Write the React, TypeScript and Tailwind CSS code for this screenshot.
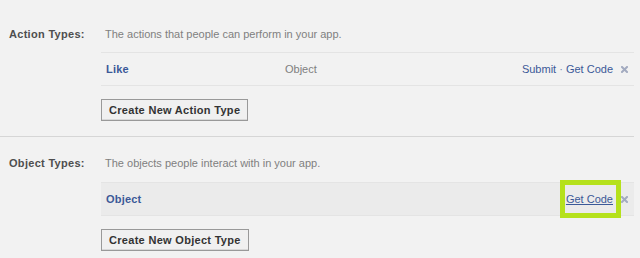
import React from 'react'

function CloseX() {
  return (
    <svg width="7" height="7" viewBox="0 0 7 7" className="ml-[8px] shrink-0">
      <path d="M1 1 L6 6 M6 1 L1 6" stroke="#a3abc0" strokeWidth="2" strokeLinecap="square" />
    </svg>
  )
}

function CreateButton({ label }: { label: string }) {
  return (
    <button className="h-[22px] px-[7px] border border-[#999] bg-[#f0f0f0] shadow-[inset_0_-1px_0_#d8d8d8] font-bold tracking-[0.3px] text-[11px] text-[#333] leading-none">
      {label}
    </button>
  )
}

export default function App() {
  return (
    <div className="w-[640px] h-[258px] bg-[#f2f2f2] font-['Liberation_Sans',Arial,sans-serif] text-[11px] overflow-hidden">
      {/* action types */}
      <section className="pt-[27px] pb-[15px] border-b border-[#d6d6d6] w-[634px]">
        <div className="flex h-[14px] items-center">
          <div className="w-[101px] pl-[9px] font-bold tracking-[0.3px] text-[#4e4e4e]">Action Types:</div>
          <div className="pl-[4px] text-[#808080]">The actions that people can perform in your app.</div>
        </div>
        <div className="ml-[101px] mt-[11px]">
          <div className="flex items-center h-[34px] border-y border-[#e4e4e4] pl-[5px] pr-[6px]">
            <span className="w-[179px] font-bold tracking-[0.2px] text-[#3b5998]">Like</span>
            <span className="text-[#808080]">Object</span>
            <span className="ml-auto text-[#3b5998]">
              Submit <span className="text-[#6d84b4]">·</span> Get Code
            </span>
            <CloseX />
          </div>
          <div className="mt-[13px]">
            <CreateButton label="Create New Action Type" />
          </div>
        </div>
      </section>

      {/* object types */}
      <section className="pt-[19px] w-[634px]">
        <div className="flex h-[14px] items-center">
          <div className="w-[101px] pl-[9px] font-bold tracking-[0.3px] text-[#4e4e4e]">Object Types:</div>
          <div className="pl-[4px] text-[#808080]">The objects people interact with in your app.</div>
        </div>
        <div className="ml-[101px] mt-[12px]">
          <div className="flex items-center h-[34px] bg-[#ebebeb] border-y border-[#e4e4e4] pl-[5px] pr-[6px]">
            <span className="font-bold tracking-[0.2px] text-[#3b5998]">Object</span>
            <span className="ml-auto relative text-[#3b5998] underline">
              Get Code
              <span className="absolute -left-[6px] -right-[8px] -top-[11px] -bottom-[11px] border-[5px] border-[#b5e11c]" />
            </span>
            <CloseX />
          </div>
          <div className="mt-[13px]">
            <CreateButton label="Create New Object Type" />
          </div>
        </div>
      </section>
    </div>
  )
}
